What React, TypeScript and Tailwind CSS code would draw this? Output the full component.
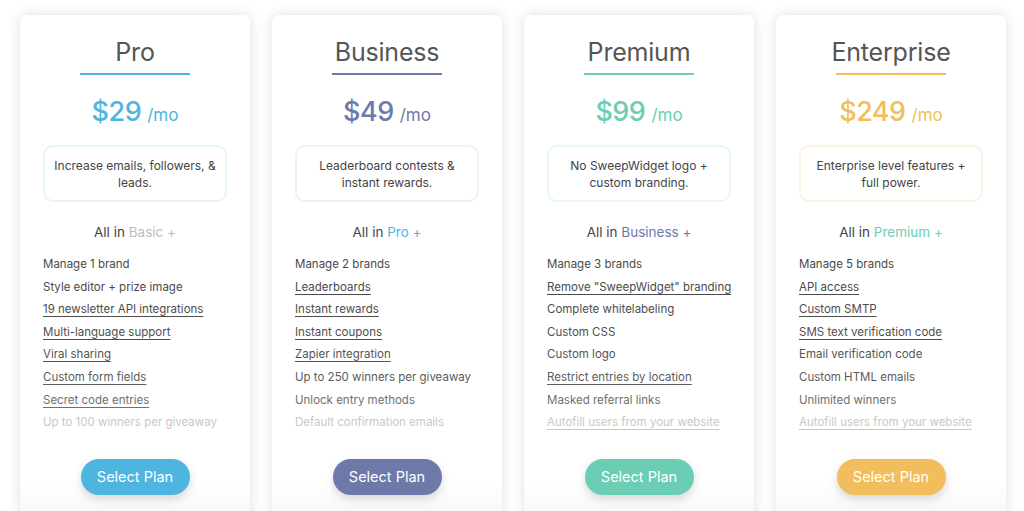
const plans = [
  {
    name: 'Pro',
    price: '$29',
    color: 'text-[#4db5e0]',
    bar: 'bg-[#4db5e0]',
    btn: 'bg-[#4db5e0]',
    box: 'border-[#e4f5fd]',
    desc: 'Increase emails, followers, & leads.',
    base: 'Basic +',
    baseColor: 'text-[#bdbdbd]',
    features: [
      ['Manage 1 brand', false],
      ['Style editor + prize image', false],
      ['19 newsletter API integrations', true],
      ['Multi-language support', true],
      ['Viral sharing', true],
      ['Custom form fields', true],
      ['Secret code entries', true],
      ['Up to 100 winners per giveaway', false],
    ],
  },
  {
    name: 'Business',
    price: '$49',
    color: 'text-[#6d79a9]',
    bar: 'bg-[#6d79a9]',
    btn: 'bg-[#6d79a9]',
    box: 'border-[#eef0fb]',
    desc: 'Leaderboard contests & instant rewards.',
    base: 'Pro +',
    baseColor: 'text-[#4db5e0]',
    features: [
      ['Manage 2 brands', false],
      ['Leaderboards', true],
      ['Instant rewards', true],
      ['Instant coupons', true],
      ['Zapier integration', true],
      ['Up to 250 winners per giveaway', false],
      ['Unlock entry methods', false],
      ['Default confirmation emails', false],
    ],
  },
  {
    name: 'Premium',
    price: '$99',
    color: 'text-[#6ccdb5]',
    bar: 'bg-[#6ccdb5]',
    btn: 'bg-[#6ccdb5]',
    box: 'border-[#e6f9f3]',
    desc: 'No SweepWidget logo + custom branding.',
    base: 'Business +',
    baseColor: 'text-[#6d79a9]',
    features: [
      ['Manage 3 brands', false],
      ['Remove "SweepWidget" branding', true],
      ['Complete whitelabeling', false],
      ['Custom CSS', false],
      ['Custom logo', false],
      ['Restrict entries by location', true],
      ['Masked referral links', false],
      ['Autofill users from your website', true],
    ],
  },
  {
    name: 'Enterprise',
    price: '$249',
    color: 'text-[#f2bd5c]',
    bar: 'bg-[#f2bd5c]',
    btn: 'bg-[#f2bd5c]',
    box: 'border-[#fdf3e2]',
    desc: 'Enterprise level features + full power.',
    base: 'Premium +',
    baseColor: 'text-[#6ccdb5]',
    features: [
      ['Manage 5 brands', false],
      ['API access', true],
      ['Custom SMTP', true],
      ['SMS text verification code', true],
      ['Email verification code', false],
      ['Custom HTML emails', false],
      ['Unlimited winners', false],
      ['Autofill users from your website', true],
    ],
  },
] as const;

// list fades out towards the bottom
const fade = [
  'text-[#4a4a4a]',
  'text-[#4a4a4a]',
  'text-[#4d4d4d]',
  'text-[#505050]',
  'text-[#555555]',
  'text-[#5c5c5c]',
  'text-[#707070]',
  'text-[#c8c8c8]',
];

export default function App() {
  return (
    <div className="w-[1024px] h-[511px] overflow-hidden bg-white font-['Inter',sans-serif]">
      <div className="grid grid-cols-4 gap-[22px] pl-[20px] pr-[18px] pt-[15px]">
        {plans.map((p) => (
          <div
            key={p.name}
            className="h-[520px] rounded-[7px] bg-gradient-to-b from-white from-[90%] to-[#f2f2f2] shadow-[0_0_14px_rgba(0,0,0,0.13)] px-[23px] flex flex-col items-center"
          >
            <h2 className="mt-[20px] text-[25px] leading-[34px] text-[#555] tracking-[-0.2px]">{p.name}</h2>
            <div className={`mt-[4px] w-[110px] h-[2px] ${p.bar}`} />
            <div className={`mt-[20px] flex items-baseline ${p.color}`}>
              <span className="text-[27px] leading-[34px] font-medium tracking-[-0.5px]">{p.price}</span>
              <span className="ml-[6px] text-[17px]">/mo</span>
            </div>
            <div
              className={`mt-[16px] w-full h-[57px] rounded-[10px] border-2 ${p.box} flex items-center justify-center px-[8px] text-center text-[12px] leading-[17px] text-[#444]`}
            >
              {p.desc}
            </div>
            <p className="mt-[20px] text-[13.5px] leading-[20px] text-[#444]">
              All in <span className={p.baseColor}>{p.base}</span>
            </p>
            <ul className="mt-[11px] w-full">
              {p.features.map(([f, u], i) => (
                <li
                  key={f}
                  className={`whitespace-nowrap text-[11.5px] leading-[22.6px] ${fade[i]} ${u ? 'underline underline-offset-[3px] decoration-[1px]' : ''}`}
                >
                  {f}
                </li>
              ))}
            </ul>
            <button
              className={`mt-[25px] w-[109px] h-[36px] rounded-full ${p.btn} text-white text-[14.5px] shadow-[0_4px_10px_rgba(0,0,0,0.15)]`}
            >
              Select Plan
            </button>
          </div>
        ))}
      </div>
    </div>
  );
}
